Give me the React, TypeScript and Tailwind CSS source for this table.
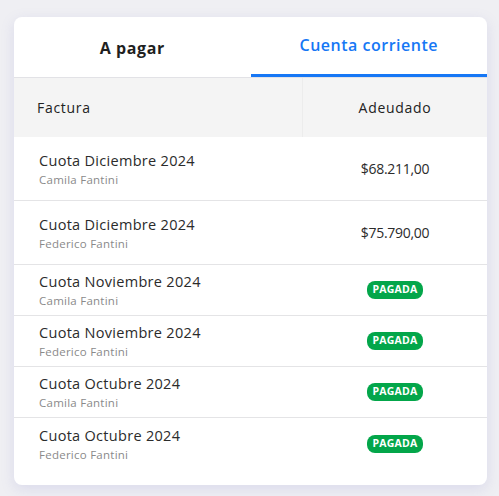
import React from "react";

type Row = {
  title: string;
  name: string;
  amount?: string;
};

const rows: Row[] = [
  { title: "Cuota Diciembre 2024", name: "Camila Fantini", amount: "$68.211,00" },
  { title: "Cuota Diciembre 2024", name: "Federico Fantini", amount: "$75.790,00" },
  { title: "Cuota Noviembre 2024", name: "Camila Fantini" },
  { title: "Cuota Noviembre 2024", name: "Federico Fantini" },
  { title: "Cuota Octubre 2024", name: "Camila Fantini" },
  { title: "Cuota Octubre 2024", name: "Federico Fantini" },
];

function PaidBadge() {
  return (
    <span className="inline-flex h-[18px] items-center rounded-[8px] bg-[#03a64a] px-[6px] text-[10.5px] font-bold tracking-[0.2px] text-white">
      PAGADA
    </span>
  );
}

export default function App() {
  return (
    <div
      className="min-h-[496px] w-full bg-[#efeff3] pt-[17px] pl-[14px] text-[#2a2a2a]"
      style={{ fontFamily: '"Open Sans", "Noto Sans", sans-serif' }}
    >
      <div className="w-[473px] overflow-hidden rounded-[8px] bg-white pb-[16px] shadow-[0_4px_14px_rgba(120,120,200,0.18)]">
        {/* tabs */}
        <div className="flex h-[61px] border-b border-[#e2e2e6]">
          <button
            type="button"
            className="flex flex-1 items-center justify-center pt-[1px] text-[16px] font-bold tracking-[0.6px] text-[#1f1f1f]"
          >
            A pagar
          </button>
          <button
            type="button"
            className="flex flex-1 items-center justify-center border-b-[3px] border-[#1677f5] pb-[1px] text-[16px] font-semibold tracking-[0.5px] text-[#1677f5]"
          >
            Cuenta corriente
          </button>
        </div>

        {/* header */}
        <div className="flex h-[59px] bg-[#f4f4f4] text-[14px] font-medium tracking-[0.7px] text-[#222]">
          <div className="flex w-[289px] items-center border-r border-[#ececec] pl-[23px]">Factura</div>
          <div className="flex flex-1 items-center justify-center">Adeudado</div>
        </div>

        {/* rows */}
        {rows.map((r, i) => (
          <div
            key={i}
            className={`flex border-[#e4e4e6] ${i < rows.length - 1 ? "border-b" : ""} ${
              r.amount ? "h-[64px]" : "h-[51px]"
            }`}
          >
            <div className="flex w-[289px] flex-col justify-center pl-[25px] pt-[1px]">
              <span className="text-[14.5px] leading-[20px] tracking-[0.3px] text-[#2b2b2b]">{r.title}</span>
              <span className="text-[11.5px] leading-[17px] tracking-[0.25px] text-[#8a8a8a]">{r.name}</span>
            </div>
            <div className="flex flex-1 items-center justify-center text-[14px] tracking-[-0.3px] text-[#2b2b2b]">
              {r.amount ? r.amount : <PaidBadge />}
            </div>
          </div>
        ))}
      </div>
    </div>
  );
}
